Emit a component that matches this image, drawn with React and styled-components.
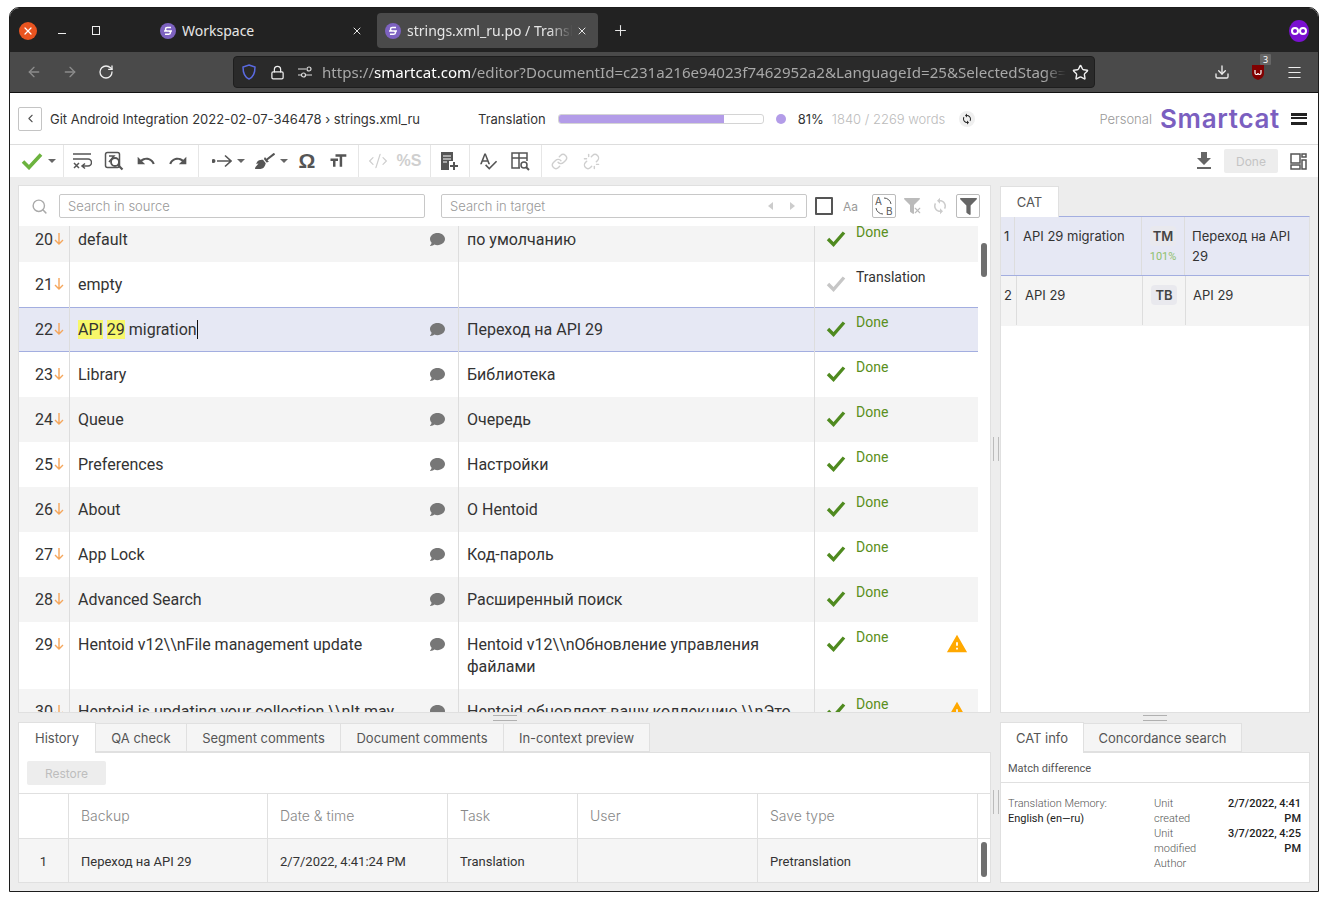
import React from 'react';
import styled, { createGlobalStyle } from 'styled-components';
import { MdUndo, MdRedo, MdFormatSize, MdSpellcheck, MdFileDownload, MdSync, MdWarning } from 'react-icons/md';
import { FaBroom, FaComment, FaFilter } from 'react-icons/fa';
import { Search, Link, Unlink, CodeXml, ChevronLeft, X, Plus, Lock, Star, Download, Menu, RotateCw, ArrowLeft, ArrowRight } from 'lucide-react';

const Global = createGlobalStyle`
html, body { margin: 0; background: #fff; }
* { box-sizing: border-box; }
`

const Window = styled.div`
width: 1310px;
height: 885px;
margin: 7px 0 0 9px;
border: 1px solid #1c1c1c;
border-radius: 10px 10px 0 0;
overflow: hidden;
display: flex;
flex-direction: column;
font-family: Inter, sans-serif;
`
const TitleBar = styled.div`
height: 44px;
background: #222;
display: flex;
padding-top: 5px;
color: #e6e6e6;
font-family: "Noto Sans", sans-serif;
flex: none;
`
const WinControls = styled.div`
width: 142px;
height: 35px;
display: flex;
align-items: center;
padding-left: 9px;
`
const CloseDot = styled.div`
width: 18px;
height: 18px;
border-radius: 50%;
background: #e95420;
color: #fff;
display: flex;
align-items: center;
justify-content: center;
`
const MinBtn = styled.div`
width: 8px;
height: 1px;
margin: 6px 0 0 21px;
background: #eee;
`
const MaxBtn = styled.div`
width: 8px;
height: 9px;
margin-left: 26px;
border: 1.5px solid #eee;
`
const Tab = styled.div`
width: 221px;
height: 35px;
margin-right: 4px;
border-radius: 4px;
background: ${p => p.$active ? '#4a4a4a' : 'transparent'};
display: flex;
align-items: center;
padding: 0 10px 0 8px;
font-size: 14px;
`
const TabTitle = styled.span`
flex: 1;
margin: 0 0 0 6px;
white-space: nowrap;
overflow: hidden;
${p => p.$fade && 'mask-image: linear-gradient(to right, #000 84%, transparent 98%);'}
`
const PlusBtn = styled.div`
height: 35px;
width: 36px;
display: flex;
align-items: center;
justify-content: center;
`
const MaskDot = styled.div`
margin-left: auto;
margin-right: 9px;
margin-top: 7px;
width: 20px;
height: 22px;
`
const NavBar = styled.div`
height: 41px;
background: #4a4a4a;
border-bottom: 1px solid #111;
display: flex;
align-items: center;
padding-left: 6px;
flex: none;
color: #eee;
`
const NavBtn = styled.div`
width: 36px;
display: flex;
justify-content: center;
position: relative;
color: ${p => p.$dim ? '#8c8c8c' : '#eee'};
`
const UrlBar = styled.div`
width: 862px;
height: 32px;
margin: 0 109px 0 109px;
background: #2a2a2a;
border: 1px solid #1e1e1e;
border-radius: 4px;
display: flex;
align-items: center;
padding-left: 1px;
`
const UrlSlot = styled.div`
width: 28px;
display: flex;
justify-content: center;
flex: none;
`
const UrlText = styled.div`
flex: 1;
margin-left: 3px;
font-family: "Noto Sans", sans-serif;
font-size: 15.1px;
white-space: nowrap;
overflow: hidden;
color: #a8a8a8;
mask-image: linear-gradient(to right, #000 97%, transparent 100%);
b { font-weight: 400; color: #fff; }
`
const Badge = styled.span`
position: absolute;
left: 20px;
top: -10px;
width: 11px;
height: 11px;
background: #666;
color: #fff;
font: 9px/11px "Noto Sans", sans-serif;
text-align: center;
border-radius: 1px;
`
const AppHeader = styled.div`
height: 52px;
flex: none;
background: #fff;
border-bottom: 1px solid #ddd;
display: flex;
align-items: center;
padding-left: 8px;
font-size: 13px;
color: #333;
`
const BackBtn = styled.div`
width: 24px;
height: 24px;
border: 1px solid #c4c4c4;
border-radius: 2px;
display: flex;
align-items: center;
justify-content: center;
color: #555;
margin-right: 8px;
`
const Crumbs = styled.div`
width: 428px;
white-space: nowrap;
`
const Progress = styled.div`
width: 206px;
height: 10px;
margin-left: 12px;
border: 1px solid #d4d4d4;
border-radius: 3px;
overflow: hidden;
background: #fff;
`
const ProgressFill = styled.div`
height: 100%;
background: #b39ce8;
`
const Dot = styled.div`
width: 10px;
height: 10px;
margin-left: 12px;
border-radius: 50%;
background: #b39ce8;
`
const Pct = styled.span`
margin-left: 12px;
`
const Words = styled.span`
margin-left: 8px;
font-weight: 300;
color: #bbb;
`
const SyncDot = styled.div`
width: 16px;
height: 16px;
margin-left: 14px;
border-radius: 50%;
background: #efefef;
display: flex;
align-items: center;
justify-content: center;
color: #222;
`
const Personal = styled.span`
margin-left: auto;
font-weight: 300;
color: #999;
`
const Logo = styled.span`
margin-left: 8px;
font-family: Inter, sans-serif;
font-weight: 600;
font-size: 26px;
letter-spacing: 0.7px;
color: #7b5fc0;
`
const Burger = styled.div`
width: 16px;
height: 12px;
margin: 0 11px 0 11px;
border-top: 3px solid #222;
border-bottom: 3px solid #222;
position: relative;
&::after {
  content: '';
  display: block;
  height: 2px;
  margin-top: 1.5px;
  background: #222;
}
`
const ToolBar = styled.div`
height: 32px;
flex: none;
background: #fff;
display: flex;
align-items: center;
`
const ToolGroup = styled.div`
height: 32px;
display: flex;
align-items: center;
gap: ${p => p.$gap ?? 12}px;
padding: 0 ${p => p.$pr ?? 10}px 0 ${p => p.$pl ?? 8}px;
border-right: 1px solid ${p => p.$noline ? 'transparent' : '#e6e6e6'};
color: ${p => p.$dim ? '#cfcfcf' : '#555'};
`
const Tool = styled.div`
width: ${p => p.$w || 20}px;
display: flex;
justify-content: center;
align-items: center;
font-family: "Liberation Sans", sans-serif;
font-weight: 700;
font-size: ${p => p.$fs || 20}px;
line-height: 20px;
margin-left: ${p => p.$ml || 0}px;
`
const Caret = styled.span`
width: 0;
height: 0;
margin-left: ${p => p.$ml ?? 5}px;
border-left: 4px solid transparent;
border-right: 4px solid transparent;
border-top: 4px solid #666;
`
const ToolRight = styled.div`
margin-left: auto;
display: flex;
align-items: center;
color: #666;
padding-right: 11px;
`
const DoneBtn = styled.div`
width: 54px;
height: 24px;
margin: 0 12px 0 8px;
background: #ededed;
border-radius: 2px;
color: #c4c4c4;
font-size: 12px;
line-height: 25px;
text-align: center;
`
const Workspace = styled.div`
flex: 1;
min-height: 0;
background: #ededed;
padding: 8px 8px 0 8px;
display: grid;
grid-template-columns: 973px 9px 310px;
grid-template-rows: 528px 8px 162px;
`
const Panel = styled.div`
background: #fff;
border: 1px solid #e0e0e0;
display: flex;
flex-direction: column;
min-height: 0;
overflow: hidden;
`
const VSplit = styled.div`
display: flex;
align-items: center;
justify-content: center;
&::after {
  content: '';
  width: 4px;
  height: 24px;
  border-left: 1px solid #bbb;
  border-right: 1px solid #bbb;
}
`
const HSplit = styled.div`
display: flex;
align-items: flex-start;
justify-content: center;
padding-top: 2px;
&::after {
  content: '';
  width: 24px;
  height: 4px;
  border-top: 1px solid #b0b0b0;
  border-bottom: 1px solid #b0b0b0;
}
`
const SearchBar = styled.div`
height: 40px;
flex: none;
display: flex;
align-items: center;
padding-left: 12px;
color: #aaa;
`
const SearchInput = styled.div`
width: ${p => p.$w}px;
height: 24px;
margin-left: ${p => p.$ml}px;
border: 1px solid #c8c8c8;
border-radius: 2px;
padding-left: 8px;
font-size: 13px;
font-weight: 300;
line-height: 23px;
color: #999;
display: flex;
align-items: center;
`
const InputArrows = styled.div`
margin-left: auto;
display: flex;
gap: 17px;
padding-right: 11px;
`
const InputArrow = styled.span`
width: 0;
height: 0;
border-top: 4px solid transparent;
border-bottom: 4px solid transparent;
border-left: ${p => p.$right ? '5px solid #ccc' : 'none'};
border-right: ${p => p.$right ? 'none' : '5px solid #ccc'};
`
const CheckBox = styled.div`
width: 18px;
height: 18px;
margin-left: 8px;
border: 2px solid #555;
border-radius: 1px;
`
const CaseLabel = styled.span`
margin-left: 10px;
font-size: 12px;
color: #999;
`
const SearchBtn = styled.div`
width: 24px;
height: 24px;
margin-left: ${p => p.$ml || 0}px;
border: ${p => p.$plain ? 'none' : '1px solid #bbb'};
border-radius: 2px;
display: flex;
align-items: center;
justify-content: center;
color: ${p => p.$color || '#555'};
position: relative;
`
const ListArea = styled.div`
flex: 1;
min-height: 0;
display: flex;
overflow: hidden;
`
const Rows = styled.div`
width: 959px;
margin-top: -9px;
flex: none;
`
const Gutter = styled.div`
flex: 1;
padding: ${p => p.$top}px 3px 0 3px;
`
const Thumb = styled.div`
height: ${p => p.$h}px;
background: #6f6f6f;
border-radius: 3px;
`
const Row = styled.div`
display: grid;
grid-template-columns: 51px 389px 356px 163px;
background: ${p => p.$sel ? '#e6e8f4' : p.$alt ? '#f4f4f4' : '#fff'};
box-shadow: ${p => p.$sel ? 'inset 0 1px 0 #a3aee0, inset 0 -1px 0 #a3aee0' : 'none'};
font-family: Roboto, sans-serif;
font-size: 16px;
line-height: 22px;
color: #333;
`
const NumCell = styled.div`
border-right: 1px solid #ddd;
padding: 12px 5px 11px 0;
display: flex;
justify-content: flex-end;
align-items: flex-start;
`
const TextCell = styled.div`
border-right: 1px solid #ddd;
padding: 12px 13px 11px 8px;
display: flex;
justify-content: space-between;
align-items: flex-start;
gap: 12px;
`
const CommentIcon = styled(FaComment)`
flex: none;
margin-top: 3px;
width: 15px;
height: 15px;
color: #777;
`
const Hl = styled.span`
background: #f7f76a;
`
const Caretline = styled.span`
border-right: 1px solid #111;
`
const StatusCell = styled.div`
display: flex;
padding: 5px 10px 0 11px;
align-items: flex-start;
font-size: 14px;
line-height: 20px;
color: ${p => p.$done ? '#5a8f20' : '#333'};
`
const StatusIcon = styled.svg`
flex: none;
margin-top: 8px;
margin-right: 10px;
`
const WarnIcon = styled(MdWarning)`
margin-left: auto;
margin-top: 6px;
color: #ffa800;
`
const TabRow = styled.div`
height: 31px;
flex: none;
display: flex;
align-items: flex-end;
`
const PanelTab = styled.div`
height: ${p => p.$active ? '100%' : 'calc(100% - 2px)'};
width: ${p => p.$w}px;
background: ${p => p.$active ? '#fff' : '#f5f5f5'};
border: 1px solid #e0e0e0;
border-bottom: ${p => p.$active ? 'none' : '1px solid #e0e0e0'};
border-left: ${p => p.$first ? '1px solid #e0e0e0' : 'none'};
font-size: 13px;
color: #555;
display: flex;
align-items: center;
justify-content: center;
white-space: nowrap;
position: relative;
z-index: 1;
margin-bottom: ${p => p.$active ? '-1px' : '0'};
`
const PanelCol = styled.div`
display: flex;
flex-direction: column;
min-height: 0;
`
const TabBody = styled(Panel)`
flex: 1;
border-top: 1px solid ${p => p.$line || '#e0e0e0'};
`
const CatRow = styled.div`
display: grid;
grid-template-columns: ${p => p.$cols};
height: ${p => p.$h}px;
background: ${p => p.$sel ? '#e6e8f4' : '#f4f4f4'};
border-bottom: 1px solid ${p => p.$sel ? '#a3aee0' : 'transparent'};
font-size: 13px;
line-height: 20px;
color: #333;
`
const CatCell = styled.div`
border-right: 1px solid #ddd;
padding: 9px 8px 0 8px;
display: ${p => p.$center ? 'flex' : 'block'};
flex-direction: column;
align-items: center;
`
const CatNum = styled(CatCell)`
padding: 9px 0 0 3px;
`
const CatLast = styled.div`
padding: 9px 6px 0 7px;
`
const Tag = styled.span`
width: 26px;
height: 20px;
background: #e9e9ee;
border-radius: 4px;
font-size: 13px;
font-weight: 600;
line-height: 20px;
text-align: center;
color: #444;
`
const Match = styled.span`
font-family: Roboto, sans-serif;
font-size: 11px;
line-height: 18px;
margin-top: 2px;
color: #8fc06b;
`
const RestoreBtn = styled.div`
width: 79px;
height: 24px;
margin: 8px 0 8px 8px;
background: #ededed;
border-radius: 2px;
font-size: 12px;
line-height: 25px;
text-align: center;
color: #bdbdbd;
flex: none;
`
const HistRow = styled.div`
display: grid;
grid-template-columns: 50px 199px 180px 130px 180px 220px 1fr;
height: ${p => p.$h}px;
flex: none;
border-top: 1px solid #e0e0e0;
background: ${p => p.$alt ? '#f5f5f5' : '#fff'};
`
const HistCell = styled.div`
border-right: 1px solid #e0e0e0;
padding: ${p => p.$head ? '0 0 2px 12px' : p.$center ? '2px 0 0 0' : '2px 0 0 12px'};
display: flex;
align-items: center;
justify-content: ${p => p.$center ? 'center' : 'flex-start'};
font-family: ${p => p.$head ? 'Inter' : 'Roboto'}, sans-serif;
font-size: ${p => p.$head ? 14 : 13}px;
font-weight: ${p => p.$head ? 300 : 400};
color: ${p => p.$head ? '#888' : '#333'};
`
const HistGutter = styled.div`
background: #fff;
padding: 3px 3px 0 3px;
`
const MatchTitle = styled.div`
height: 30px;
flex: none;
padding: 1px 0 0 7px;
border-bottom: 1px solid #e0e0e0;
font-family: Roboto, sans-serif;
font-size: 11px;
line-height: 29px;
color: #555;
`
const InfoGrid = styled.div`
display: grid;
grid-template-columns: 146px 56px 91px;
padding: 13px 0 0 7px;
font-family: Roboto, sans-serif;
font-size: 11px;
line-height: 15px;
`
const InfoLabel = styled.div`
font-weight: 300;
color: #555;
`
const InfoStrong = styled.div`
color: #222;
`
const InfoValue = styled.div`
font-weight: 500;
color: #222;
text-align: right;
`

const Favicon = () => (
  <svg width="16" height="16" viewBox="0 0 16 16" style={{ flex: 'none' }}>
    <circle cx="8" cy="8" r="8" fill="#7d62c0" />
    <path d="M11 4.500H7.200a1.700 1.700 0 0 0 0 3.400h1.600a1.700 1.700 0 0 1 0 3.400H5M4 8h8" stroke="#fff" strokeWidth="1.500" fill="none" />
  </svg>
);

const Tick = ({ color = '#4f8a1f', size = 20 }) => (
  <StatusIcon width={size} height="17" viewBox="0 0 20 17">
    <path d="M2 9l5.500 5.500L18 2.500" fill="none" stroke={color} strokeWidth="3.400" />
  </StatusIcon>
);

const DownArrow = () => (
  <svg width="10" height="14" viewBox="0 0 10 14" style={{ marginTop: 3, marginLeft: 1 }}>
    <path d="M5 1v11M1 8l4 4 4-4" fill="none" stroke="#f5a65b" strokeWidth="1.400" />
  </svg>
);

const rows = [
  { n: 20, src: 'default', tgt: 'по умолчанию', alt: true },
  { n: 21, src: 'empty', tgt: '', status: 'Translation', noComment: true },
  { n: 22, src: <><Hl>API</Hl> <Hl>29</Hl> <Caretline>migration</Caretline></>, tgt: 'Переход на API 29', sel: true },
  { n: 23, src: 'Library', tgt: 'Библиотека' },
  { n: 24, src: 'Queue', tgt: 'Очередь', alt: true },
  { n: 25, src: 'Preferences', tgt: 'Настройки' },
  { n: 26, src: 'About', tgt: 'О Hentoid', alt: true },
  { n: 27, src: 'App Lock', tgt: 'Код-пароль' },
  { n: 28, src: 'Advanced Search', tgt: 'Расширенный поиск', alt: true },
  { n: 29, src: 'Hentoid v12\\\\nFile management update', tgt: 'Hentoid v12\\\\nОбновление управления файлами', warn: true },
  { n: 30, src: 'Hentoid is updating your collection \\\\nIt may', tgt: 'Hentoid обновляет вашу коллекцию \\\\nЭто', warn: true, alt: true },
];

const bottomTabs = [
  ['History', 78], ['QA check', 91], ['Segment comments', 154], ['Document comments', 163], ['In-context preview', 146],
];

export default function App() {
  return (
    <>
      <Global />
      <Window>
        <TitleBar>
          <WinControls>
            <CloseDot><X size={12} strokeWidth={2.5} /></CloseDot>
            <MinBtn />
            <MaxBtn />
          </WinControls>
          <Tab>
            <Favicon /><TabTitle>Workspace</TabTitle><X size={12} />
          </Tab>
          <Tab $active>
            <Favicon /><TabTitle $fade>strings.xml_ru.po / Translation</TabTitle><X size={12} />
          </Tab>
          <PlusBtn><Plus size={17} strokeWidth={1.5} /></PlusBtn>
          <MaskDot>
            <svg width="20" height="22" viewBox="0 0 20 22">
              <ellipse cx="10" cy="11" rx="10" ry="11" fill="#7a10d0" />
              <circle cx="6" cy="11" r="3" fill="none" stroke="#fff" strokeWidth="2" />
              <circle cx="14" cy="11" r="3" fill="none" stroke="#fff" strokeWidth="2" />
            </svg>
          </MaskDot>
        </TitleBar>
        <NavBar>
          <NavBtn $dim><ArrowLeft size={16} /></NavBtn>
          <NavBtn $dim><ArrowRight size={16} /></NavBtn>
          <NavBtn><RotateCw size={16} /></NavBtn>
          <UrlBar>
            <UrlSlot>
              <svg width="14" height="16" viewBox="0 0 14 16"><path d="M7 1l6 2c0 6-1 10-6 12C2 13 1 9 1 3z" fill="none" stroke="#5a6ae0" strokeWidth="1.500" /></svg>
            </UrlSlot>
            <UrlSlot><Lock size={15} /></UrlSlot>
            <UrlSlot>
              <svg width="16" height="12" viewBox="0 0 16 12" fill="none" stroke="#ddd" strokeWidth="1.200">
                <path d="M1 3h8M1 9h3M9 9h6" /><circle cx="12" cy="3" r="2" /><circle cx="6.500" cy="9" r="2" />
              </svg>
            </UrlSlot>
            <UrlText>https://<b>smartcat.com</b>/editor?DocumentId=c231a216e94023f7462952a2&amp;LanguageId=25&amp;SelectedStage=1</UrlText>
            <UrlSlot><Star size={17} /></UrlSlot>
          </UrlBar>
          <NavBtn><Download size={16} /></NavBtn>
          <NavBtn>
            <svg width="14" height="17" viewBox="0 0 14 17">
              <path d="M1 1h12v8c0 4-3 6-6 7-3-1-6-3-6-7z" fill="#800000" />
              <path d="M4 6v3a1.500 1.500 0 0 0 3 0 1.500 1.500 0 0 0 3 0V6" fill="none" stroke="#fff" strokeWidth="1.200" />
            </svg>
            <Badge>3</Badge>
          </NavBtn>
          <NavBtn><Menu size={17} strokeWidth={1.5} /></NavBtn>
        </NavBar>
        <AppHeader>
          <BackBtn><ChevronLeft size={13} /></BackBtn>
          <Crumbs>Git Android Integration 2022-02-07-346478 › strings.xml_ru</Crumbs>
          <span>Translation</span>
          <Progress><ProgressFill style={{ width: '81%' }} /></Progress>
          <Dot />
          <Pct>81%</Pct>
          <Words>1840 / 2269 words</Words>
          <SyncDot><MdSync size={12} /></SyncDot>
          <Personal>Personal</Personal>
          <Logo>Smartcat</Logo>
          <Burger />
        </AppHeader>
        <ToolBar>
          <ToolGroup $pl={11} $pr={7}>
            <svg width="22" height="18" viewBox="0 0 22 18"><path d="M2 9.500l6 6L20 2.500" fill="none" stroke="#6cb33f" strokeWidth="3.600" /></svg>
            <Caret $ml={-7} />
          </ToolGroup>
          <ToolGroup>
            <Tool>
              <svg width="20" height="18" viewBox="0 0 20 18" fill="none" stroke="#555" strokeWidth="1.500">
                <path d="M1 2h18M1 7h15a3 3 0 0 1 0 7h-5M13 11.500l-3 2.500 3 2.500M2 11l5 5M7 11l-5 5" />
              </svg>
            </Tool>
            <Tool>
              <svg width="20" height="20" viewBox="0 0 20 20" fill="none" stroke="#555" strokeWidth="1.500">
                <rect x="1.500" y="1.500" width="14" height="15" rx="2" />
                <circle cx="11" cy="11" r="4" strokeWidth="1.800" /><path d="M14 14l4.500 4.500" strokeWidth="2.200" /><path d="M5 5h5l-5 6" />
              </svg>
            </Tool>
            <Tool><MdUndo size={26} /></Tool>
            <Tool><MdRedo size={26} /></Tool>
          </ToolGroup>
          <ToolGroup $pl={13} $gap={10}>
            <Tool>
              <svg width="20" height="14" viewBox="0 0 20 14" fill="none" stroke="#555" strokeWidth="1.600">
                <circle cx="1.500" cy="7" r="1.200" fill="#555" /><path d="M5 7h14M13 1.500L19 7l-6 5.500" />
              </svg>
            </Tool>
            <Caret $ml={-5} />
            <Tool><FaBroom size={20} /></Tool>
            <Caret $ml={-5} />
            <Tool $w={18} $fs={21}>Ω</Tool>
            <Tool $ml={2}><MdFormatSize size={24} /></Tool>
          </ToolGroup>
          <ToolGroup $dim $pl={9} $gap={10}>
            <Tool><CodeXml size={20} strokeWidth={1.5} /></Tool>
            <Tool $w={22} $fs={16}>%S</Tool>
          </ToolGroup>
          <ToolGroup>
            <Tool>
              <svg width="20" height="20" viewBox="0 0 20 20">
                <path d="M2 1h12v9h-4v9H2z" fill="#555" />
                <path d="M4 5h8M4 8h8M4 11h4" stroke="#fff" strokeWidth="1.200" />
                <path d="M15 11v8M11 15h8" stroke="#555" strokeWidth="2" />
              </svg>
            </Tool>
          </ToolGroup>
          <ToolGroup $pr={11}>
            <Tool><MdSpellcheck size={22} /></Tool>
            <Tool>
              <svg width="20" height="20" viewBox="0 0 20 20" fill="none" stroke="#555" strokeWidth="1.500">
                <path d="M10 17H2V2h15v8M2 7h15M9 2v15" /><circle cx="14" cy="14" r="3" /><path d="M16 16l3 3" strokeWidth="2" />
              </svg>
            </Tool>
          </ToolGroup>
          <ToolGroup $dim $noline $gap={14}>
            <Tool $w={18}><Link size={17} /></Tool>
            <Tool $w={18}><Unlink size={17} /></Tool>
          </ToolGroup>
          <ToolRight>
            <MdFileDownload size={24} />
            <DoneBtn>Done</DoneBtn>
            <svg width="17" height="17" viewBox="0 0 17 17" fill="none" stroke="#555" strokeWidth="1.500">
              <rect x="1" y="1" width="9" height="9" /><rect x="12" y="1" width="4" height="3" /><rect x="12" y="7" width="4" height="9" /><rect x="1" y="12" width="9" height="4" />
            </svg>
          </ToolRight>
        </ToolBar>
        <Workspace>
          <Panel>
            <SearchBar>
              <Search size={17} />
              <SearchInput $w={366} $ml={11}>Search in source</SearchInput>
              <SearchInput $w={366} $ml={16}>
                Search in target
                <InputArrows><InputArrow /><InputArrow $right /></InputArrows>
              </SearchInput>
              <CheckBox />
              <CaseLabel>Aa</CaseLabel>
              <SearchBtn $ml={14}>
                <svg width="22" height="22" viewBox="0 0 22 22" fill="none" stroke="#555">
                  <text x="2" y="10" fontFamily="Inter" fontSize="10" fill="#555" stroke="none">A</text>
                  <text x="13" y="20" fontFamily="Inter" fontSize="10" fill="#555" stroke="none">B</text>
                  <path d="M11 3a7 7 0 0 1 7 6M10 19a7 7 0 0 1-7-6" />
                </svg>
              </SearchBtn>
              <SearchBtn $ml={4} $plain $color="#bbb"><FaFilter size={16} /><X size={9} strokeWidth={3} style={{ position: 'absolute', right: 2, bottom: 3 }} /></SearchBtn>
              <SearchBtn $ml={4} $plain $color="#ccc"><MdSync size={18} /></SearchBtn>
              <SearchBtn $ml={4} $color="#666"><FaFilter size={17} /></SearchBtn>
            </SearchBar>
            <ListArea>
              <Rows>
                {rows.map(r => (
                  <Row key={r.n} $sel={r.sel} $alt={r.alt}>
                    <NumCell>{r.n}<DownArrow /></NumCell>
                    <TextCell>
                      <span>{r.src}</span>
                      {!r.noComment && <CommentIcon />}
                    </TextCell>
                    <TextCell><span>{r.tgt}</span></TextCell>
                    <StatusCell $done={!r.status}>
                      <Tick color={r.status ? '#c6c6c6' : '#4f8a1f'} />
                      {r.status || 'Done'}
                      {r.warn && <WarnIcon size={22} />}
                    </StatusCell>
                  </Row>
                ))}
              </Rows>
              <Gutter $top={17}><Thumb $h={34} /></Gutter>
            </ListArea>
          </Panel>
          <VSplit />
          <PanelCol>
            <TabRow><PanelTab $active $first $w={59}>CAT</PanelTab></TabRow>
            <TabBody $line="#a3aee0">
              <CatRow $sel $h={59} $cols="14px 127px 43px 1fr">
                <CatNum>1</CatNum>
                <CatCell>API 29 migration</CatCell>
                <CatCell $center><Tag>TM</Tag><Match>101%</Match></CatCell>
                <CatLast>Переход на API 29</CatLast>
              </CatRow>
              <CatRow $h={50} $cols="16px 126px 43px 1fr">
                <CatNum>2</CatNum>
                <CatCell>API 29</CatCell>
                <CatCell $center><Tag>TB</Tag></CatCell>
                <CatLast>API 29</CatLast>
              </CatRow>
            </TabBody>
          </PanelCol>
          <HSplit />
          <div />
          <HSplit />
          <PanelCol>
            <TabRow>
              {bottomTabs.map(([t, w], i) => (
                <PanelTab key={t} $w={w} $first={i === 0} $active={i === 0}>{t}</PanelTab>
              ))}
            </TabRow>
            <TabBody>
              <RestoreBtn>Restore</RestoreBtn>
              <HistRow $h={45}>
                <HistCell />
                <HistCell $head>Backup</HistCell>
                <HistCell $head>Date &amp; time</HistCell>
                <HistCell $head>Task</HistCell>
                <HistCell $head>User</HistCell>
                <HistCell $head>Save type</HistCell>
                <div />
              </HistRow>
              <HistRow $h={44} $alt>
                <HistCell $center>1</HistCell>
                <HistCell>Переход на API 29</HistCell>
                <HistCell>2/7/2022, 4:41:24 PM</HistCell>
                <HistCell>Translation</HistCell>
                <HistCell />
                <HistCell>Pretranslation</HistCell>
                <HistGutter><Thumb $h={35} /></HistGutter>
              </HistRow>
            </TabBody>
          </PanelCol>
          <VSplit />
          <PanelCol>
            <TabRow>
              <PanelTab $active $first $w={84}>CAT info</PanelTab>
              <PanelTab $w={158}>Concordance search</PanelTab>
            </TabRow>
            <TabBody>
              <MatchTitle>Match difference</MatchTitle>
              <InfoGrid>
                <div>
                  <InfoLabel>Translation Memory:</InfoLabel>
                  <InfoStrong>English (en—ru)</InfoStrong>
                </div>
                <div>
                  <InfoLabel>Unit created</InfoLabel>
                  <InfoLabel>Unit modified</InfoLabel>
                  <InfoLabel>Author</InfoLabel>
                </div>
                <div>
                  <InfoValue>2/7/2022, 4:41 PM</InfoValue>
                  <InfoValue>3/7/2022, 4:25 PM</InfoValue>
                </div>
              </InfoGrid>
            </TabBody>
          </PanelCol>
        </Workspace>
      </Window>
    </>
  );
}
